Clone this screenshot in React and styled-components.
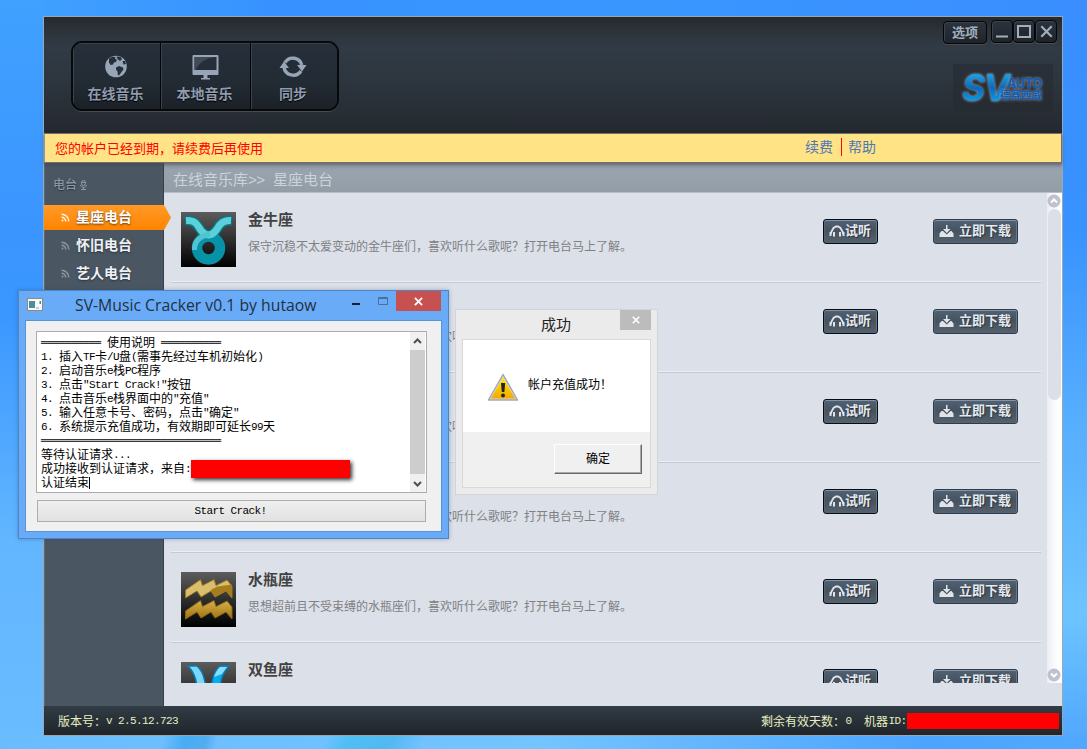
import React from "react";
import styled, { createGlobalStyle, css } from "styled-components";

const CJK = '"Liberation Sans", "Noto Sans CJK SC", sans-serif';
const PIXEL = '"Liberation Mono", "Noto Sans CJK SC", monospace';

const Global = createGlobalStyle`
  * { box-sizing: border-box; }
  body { margin: 0; font-family: ${CJK}; overflow: hidden; }
`;

const Desktop = styled.div`
  position: relative;
  width: 1087px;
  height: 749px;
  overflow: hidden;
  background:
    linear-gradient(100deg, transparent 15%, rgba(58, 166, 240, 0.75) 17%, rgba(70, 165, 235, 0.7) 19%, transparent 20%) 0 736px / 1087px 13px no-repeat,
    linear-gradient(120deg, transparent 30%, rgba(70, 190, 240, 0.8) 32%, rgba(70, 180, 235, 0.7) 36%, transparent 39%) 0 736px / 1087px 13px no-repeat,
    linear-gradient(90deg, #6bbcff 0%, #73c4ff 50%, #4da4ff 85%, #50a8ff 100%) 0 736px / 1087px 13px no-repeat,
    linear-gradient(180deg, #3a8eff 0%, #3892ff 30%, #55adff 55%, #6cc4ff 82%, #4fa6ff 100%) 1063px 0 / 24px 749px no-repeat,
    linear-gradient(180deg, #40a1ff 0%, #3b95ff 30%, #3a97ff 42%, #62b6ff 72%, #6abcff 100%) 0 0 / 44px 749px no-repeat,
    linear-gradient(90deg, #41a2ff 0%, #3792ff 25%, #3996ff 60%, #3a8eff 100%);
`;

const AppWindow = styled.div`
  position: absolute;
  left: 43px;
  top: 16px;
  width: 1020px;
  height: 720px;
  display: flex;
  flex-direction: column;
  border: 1px solid #9aa6b2;
  background: #dce0e8;
`;

const Header = styled.header`
  height: 116px;
  flex: none;
  display: flex;
  justify-content: space-between;
  align-items: flex-start;
  padding: 2px 3px 0 27px;
  background: linear-gradient(180deg, #26292e 0%, #2d343c 14%, #313b45 26%, #2d353e 55%, #24292f 100%);
`;

const ToolGroup = styled.nav`
  display: flex;
  width: 268px;
  height: 70px;
  margin-top: 22px;
  border: 2px solid #07090b;
  border-radius: 11px;
  box-shadow: 0 1px 0 #434b53;
  overflow: hidden;
`;

const Tool = styled.div`
  width: ${(p) => p.$w}px;
  display: flex;
  flex-direction: column;
  align-items: center;
  padding-right: 2px;
  border-left: ${(p) => (p.$first ? "0" : "1px solid #020304")};
  box-shadow: inset 1px 1px 0 #3b444e;
  background: linear-gradient(180deg, #262f3a 0%, #232c35 55%, #1c2127 100%);
  color: #8f9caf;
  font: 700 14px/20px ${CJK};
  text-shadow: 0 1px 1px #000;
  svg { height: 30px; margin: 8px 0 3px; flex: none; }
`;

const HeaderRight = styled.div`
  display: flex;
  flex-direction: column;
  align-items: flex-end;
`;

const WinBar = styled.div`
  display: flex;
  align-items: flex-start;
  padding-top: 1px;
  padding-right: 2px;
`;

const darkKey = css`
  border: 1px solid #050607;
  border-radius: 4px;
  background: linear-gradient(180deg, #2b333d, #1e242a);
  box-shadow: 0 1px 0 #4d4a4d, inset 1px 1px 0 #39434e;
  color: #a3aebd;
`;

const OptionKey = styled.div`
  ${darkKey}
  width: 44px;
  height: 23px;
  margin: 1px 4px 0 0;
  font: 700 13px/22px ${CJK};
  text-align: center;
`;

const WinKey = styled.div`
  ${darkKey}
  width: 22px;
  height: 23px;
  display: flex;
  align-items: center;
  justify-content: center;
`;

const LogoBox = styled.div`
  width: 100px;
  height: 47px;
  margin: 20px 6px 0 0;
  display: flex;
  align-items: center;
  padding-left: 9px;
  background: rgba(38, 42, 49, 0.55);
`;

const LogoMark = styled.div`
  flex: none;
  width: 60px;
  margin-right: -22px;
  font: italic 700 37px/42px Inter, "Liberation Sans", sans-serif;
  letter-spacing: -1.5px;
  transform: scaleX(0.95);
  transform-origin: left;
  white-space: nowrap;
  color: transparent;
  background: linear-gradient(180deg, #1a9be2 20%, #0b69bb 50%, #1298e0 80%);
  background-clip: text;
  filter: drop-shadow(0 0 1.5px rgba(200, 215, 235, 0.8));
`;

const LogoText = styled.div`
  flex: none;
  width: 43px;
  margin: 2px 0 0 -1px;
  color: #0f5cb4;
  text-align: right;
  white-space: nowrap;
  filter: drop-shadow(0 0 1.5px rgba(200, 215, 235, 0.8));
  div { font: 700 12.5px/12px Inter, "Liberation Sans", sans-serif; letter-spacing: -0.2px; }
  small { display: block; font: 700 10.5px/10px ${CJK}; }
`;

const Notice = styled.div`
  height: 30px;
  flex: none;
  display: flex;
  align-items: center;
  padding: 0 185px 2px 10px;
  border: 1px solid #73706a;
  border-left-color: #8d98a3;
  background: #ffe384;
  color: #f00;
  font-size: 13px;
  box-shadow: 0 2px 3px rgba(60, 70, 80, 0.55);
  z-index: 1;
`;

const NoticeLinks = styled.div`
  margin-left: auto;
  display: flex;
  align-items: center;
  color: #4d78b8;
  font-size: 14px;
  line-height: 18px;
  span + span { border-left: 1px solid #f00; margin-left: 8px; padding-left: 6px; }
`;

const Body = styled.div`
  flex: 1;
  min-height: 0;
  display: flex;
`;

const Sidebar = styled.aside`
  width: 120px;
  flex: none;
  background: #4a5763;
  border-left: 1px solid #5c6975;
  border-right: 1px solid #36414c;
`;

const SideTitle = styled.div`
  height: 42px;
  display: flex;
  align-items: center;
  gap: 3px;
  padding: 1px 0 0 8px;
  color: #8a97a5;
  font: 500 12px/18px ${CJK};
  text-shadow: 0 1px 1px #2d363f;
`;

const SideItem = styled.div`
  height: 25px;
  margin: 0 ${(p) => (p.$active ? "-8px" : "0")} 3px -1px;
  display: flex;
  align-items: center;
  gap: 6px;
  padding-left: 17px;
  color: ${(p) => (p.$active ? "#fff" : "#edf1f5")};
  font: 700 14px/25px ${CJK};
  text-shadow: 0 1px 2px rgba(30, 35, 40, 0.7);
  ${(p) =>
    p.$active &&
    css`
      position: relative;
      background: linear-gradient(180deg, #ff9a28, #ff8400);
      clip-path: polygon(0 0, 120px 0, 100% 50%, 120px 100%, 0 100%);
    `}
  svg { color: ${(p) => (p.$active ? "#fff0dc" : "#8b97a4")}; }
`;

const Main = styled.main`
  flex: 1;
  min-width: 0;
  display: flex;
  flex-direction: column;
`;

const Crumb = styled.div`
  height: 30px;
  flex: none;
  padding: 1px 0 0 9px;
  border-bottom: 1px solid #b5bfc9;
  background: linear-gradient(180deg, #8f99a4, #98a3ae 30%, #929da6);
  color: #ccd3da;
  font: 15px/32px ${CJK};
  i { font: 15px/1 ${PIXEL}; letter-spacing: -0.7px; }
`;

const Scroller = styled.div`
  height: 490px;
  flex: none;
  display: flex;
  justify-content: space-between;
  overflow: hidden;
`;

const List = styled.div`
  width: 870px;
  margin-left: 7px;
`;

const Row = styled.div`
  height: 90px;
  display: flex;
  padding: 19px 0 0 10px;
  border-bottom: 1px solid #c3c9d8;
  box-shadow: inset 0 -1px 0 #ebeff5;
`;

const Thumb = styled.div`
  width: 55px;
  height: 55px;
  background: linear-gradient(180deg, #5c5c5c, #000);
  svg { display: block; }
`;

const RowText = styled.div`
  width: 587px;
  padding-left: 12px;
  h3 { margin: -3px 0 9px; font: 700 15px/21px ${CJK}; color: #424242; }
  p { margin: 0; font: 12px/17px ${CJK}; color: #7e8084; white-space: nowrap; }
`;

const Key = styled.div`
  width: ${(p) => p.$w}px;
  height: 25px;
  margin: 7px ${(p) => p.$gap || 0}px 0 0;
  display: flex;
  align-items: center;
  justify-content: space-between;
  padding: 0 6px 1px 5px;
  border: 1px solid ${(p) => p.$edge};
  border-radius: 3px;
  box-shadow: inset 0 1px 0 #8194a8, inset -1px 0 0 #63778b, inset 0 0 0 1px #526477;
  background: linear-gradient(180deg, #526275, #46535f 45%, #55626e);
  color: #e3e8ee;
  font: 700 13px/22px ${CJK};
  text-shadow: 1px 1px 1px #27303a;
`;

const ScrollRail = styled.div`
  width: 15px;
  display: flex;
  flex-direction: column;
  align-items: center;
  justify-content: space-between;
  padding: 1px 1px 1px 0;
  background: linear-gradient(90deg, #eceef3, #fff 70%);
`;

const ScrollThumb = styled.div`
  width: 13px;
  height: 191px;
  margin: 1px 0 auto;
  border-radius: 7px;
  background: #dcdee8;
`;

const Footer = styled.footer`
  height: 29px;
  flex: none;
  display: flex;
  align-items: center;
  padding: 0 3px 0 14px;
  background: linear-gradient(180deg, #313c46, #20252a);
  color: #e7efc2;
  font-size: 12px;
  white-space: pre;
`;

const StatusRight = styled.div`
  margin-left: auto;
  display: flex;
  align-items: center;
  gap: 0.5px;
`;

const Redacted = styled.span`
  display: inline-block;
  flex: none;
  width: ${(p) => p.$w}px;
  height: ${(p) => p.$h}px;
  background: #f00;
  ${(p) => p.$shadow && "box-shadow: 2px 2px 4px rgba(0,0,0,.8);"}
`;

const Cracker = styled.div`
  position: absolute;
  z-index: 3;
  left: 18px;
  top: 290px;
  width: 431px;
  height: 249px;
  border: 1px solid #4b86c6;
  background: #6aabf7;
  box-shadow: 0 0 4px rgba(40, 60, 90, 0.35);
  padding: 0 6px 6px;
  display: flex;
  flex-direction: column;
`;

const CrackTitle = styled.div`
  height: 29px;
  flex: none;
  display: flex;
  align-items: flex-start;
  padding-left: 2px;
  color: #22303f;
`;

const AppIconBox = styled.div`
  width: 16px;
  padding-top: 7px;
  svg { display: block; }
`;

const CrackName = styled.div`
  width: 284px;
  padding-left: 32px;
  font: 15.75px/29px "Open Sans", sans-serif;
  white-space: nowrap;
`;

const CloseKey = styled.div`
  width: ${(p) => p.$w}px;
  height: 20px;
  display: flex;
  align-items: center;
  justify-content: center;
  background: ${(p) => p.$bg};
`;

const CrackBody = styled.div`
  flex: 1;
  display: flex;
  flex-direction: column;
  padding: 10px 14px 9px 10px;
  border: 1px solid #5793d6;
  background: #f0f0f0;
`;

const TextArea = styled.div`
  height: 162px;
  width: 391px;
  display: flex;
  justify-content: space-between;
  border: 1px solid #abadb3;
  background: #fff;
`;

const Lines = styled.div`
  padding: 4px 0 0 4px;
  color: #000;
  font-size: 12px;
  white-space: pre;
`;

const Line = styled.div`
  height: 14px;
  line-height: 14px;
  display: flex;
  align-items: center;
`;

const Latin = styled.span`
  font-family: "Liberation Mono", monospace;
  font-size: 11px;
  letter-spacing: -0.6px;
`;

const Rule = styled.span`
  font-family: "DejaVu Sans Mono", monospace;
  font-size: 10px;
  letter-spacing: -0.02px;
`;

const Caret = styled.span`
  width: 1px;
  height: 12px;
  background: #000;
`;

const NativeRail = styled.div`
  width: 15px;
  margin-right: 1px;
  display: flex;
  flex-direction: column;
  align-items: center;
  background: #f0f0f0;
  &::before { content: ""; order: 1; width: 100%; height: 124px; background: #cdcdcd; }
  svg { height: 18px; }
  svg:last-child { order: 2; }
`;

const StartKey = styled.div`
  width: 389px;
  height: 22px;
  margin: 7px 0 0 1px;
  padding-right: 2px;
  border: 1px solid #adadad;
  background: linear-gradient(180deg, #efefef, #e2e2e2);
  font-size: 12px;
  line-height: 19px;
  text-align: center;
`;

const Dialog = styled.div`
  position: absolute;
  z-index: 2;
  left: 455px;
  top: 309px;
  width: 203px;
  height: 186px;
  display: flex;
  flex-direction: column;
  padding: 0 6px 6px;
  border: 1px solid #d2d4d7;
  background: #ebebeb;
`;

const DialogTitle = styled.div`
  height: 29px;
  display: flex;
  justify-content: flex-end;
  font: 15px/29px ${CJK};
  color: #222;
  > span { width: 79px; }
`;

const DialogBody = styled.div`
  flex: 1;
  display: flex;
  flex-direction: column;
  border: 1px solid #d9d9d9;
  background: #f0f0f0;
`;

const Message = styled.div`
  height: 92px;
  display: flex;
  align-items: center;
  gap: 9px;
  padding: 2px 0 0 24px;
  background: #fff;
  font-size: 12px;
  color: #000;
  span { margin-top: -8px; white-space: nowrap; }
`;

const ClassicKey = styled.div`
  width: 88px;
  height: 30px;
  margin: 12px 8px 0 auto;
  border: 1px solid;
  border-color: #fff #696969 #696969 #fff;
  box-shadow: inset -1px -1px 0 #a8a8a8;
  font: 12px/29px ${CJK};
  text-align: center;
`;

/* Half-width characters take exactly 6px beside 12px ideographs. */
const Mixed = ({ children }) =>
  children.split(/(═+|[\x20-\x7e]+)/).map((s, i) => {
    if (!s) return null;
    if (s[0] === "═") return <Rule key={i}>{s}</Rule>;
    return i % 2 ? <Latin key={i}>{s}</Latin> : <span key={i}>{s}</span>;
  });

const GlobeIcon = () => (
  <svg width="24" height="30" viewBox="0 0 24 30">
    <circle cx="12" cy="15.500" r="10.800" fill="#98a5b6" />
    <path d="M5 7.500l3.500 -1.800 3 .3 -.5 2 2 .5 -1 2.500 -2 .5 -1 2 -2.500 .5 -1.500 -2.500z M12.500 5.500l4 .5 1.500 2 -2 2 -2.500 -2z M12 16.500l3 -1.500 4 1.500 .5 2 -2 2.500 -2.500 3.500 -1.200 -.8 -.3 -3.200 -1.500 -2z M18.500 10l2.500 0 1 3 -2.500 .5z" fill="#25303b" />
  </svg>
);

const MonitorIcon = () => (
  <svg width="28" height="30" viewBox="0 0 28 30">
    <path d="M2.500 4h24q1 0 1 1v18q0 1-1 1h-10v3h2.500v1.500h-9v-1.500h2.500v-3h-10q-1 0-1-1v-18q0-1 1-1z" fill="#98a5b6" />
    <rect x="3.500" y="6" width="22" height="13" fill="#262f39" />
    <path d="M3.500 6h22c-11 1-17 5-21 13h-1z" fill="#414b56" />
  </svg>
);

const SyncIcon = () => (
  <svg width="28" height="30" viewBox="0 0 28 30">
    <g fill="none" stroke="#98a5b6" strokeWidth="3.400">
      <path d="M6 11.500A9.300 9.300 0 0 1 22.800 14" />
      <path d="M22 20A9.300 9.300 0 0 1 5 16" />
    </g>
    <path d="M18 14h9.500l-4.500 6.500z M.5 17l4.500 -6.500 5 6.500z" fill="#98a5b6" />
  </svg>
);

const FeedIcon = () => (
  <svg width="9" height="9" viewBox="0 0 9 9" fill="none" stroke="currentColor" strokeWidth="1.500">
    <path d="M.5 1.200A7.300 7.300 0 0 1 7.800 8.500M.5 4.200A4.300 4.300 0 0 1 4.800 8.500" />
    <circle cx="1.500" cy="7.500" r="1" fill="currentColor" stroke="none" />
  </svg>
);

const MicIcon = () => (
  <svg width="7" height="10" viewBox="0 0 7 10" fill="none" stroke="#8a97a5">
    <rect x="1.500" y=".5" width="4" height="5" rx="2" />
    <path d="M1.500 2.500h4M.5 5c0 3 6 3 6 0M3.500 7v2.500M1 9.500h5" />
  </svg>
);

const HeadphoneIcon = () => (
  <svg width="16" height="12" viewBox="0 0 16 12">
    <path d="M2 9V7.500L4.500 3L7 1.500H9L11.500 3L14 7.500V9" fill="none" stroke="#dfe4ea" strokeWidth="1.800" />
    <path d="M.5 7h2v4h-2z M4 7h2v4.500h-2z M10 7h2v4.500h-2z M13.500 7h2v4h-2z" fill="#dfe4ea" />
  </svg>
);

const DownloadIcon = () => (
  <svg width="15" height="13" viewBox="0 0 15 13" fill="#dfe4ea">
    <path d="M7 0h1.500v4h3l-3.700 4 -3.800 -4h3z" />
    <path d="M2.500 6h1.500l3.800 3.500 3.700 -3.500h1l2 2.500v3.500h-14v-3.500z" />
  </svg>
);

const RoundArrow = ({ down }) => (
  <svg width="14" height="14" viewBox="0 0 14 14">
    <circle cx="7" cy="7" r="6.500" fill="#bfc1d0" />
    <path d={down ? "M4 5.500l3 3 3-3" : "M4 8.500l3-3 3 3"} fill="none" stroke="#fff" strokeWidth="2" />
  </svg>
);

const NativeArrow = ({ down }) => (
  <svg width="15" height="18" viewBox="0 0 15 18">
    <path d={down ? "M4 8l3.500 3.500L11 8" : "M4 11l3.500-3.500L11 11"} fill="none" stroke="#505050" strokeWidth="2" />
  </svg>
);

const Taurus = () => (
  <svg width="55" height="55" viewBox="0 0 55 55">
    <g fill="none" strokeLinejoin="round">
      <path d="M4 8.500C14 8 16 12 19 17C22 21.500 24 23 27.500 23C31 23 33 21.500 36 17C39 12 42 8 51 8.500" stroke="#0a7686" strokeWidth="10" />
      <circle cx="27.500" cy="36" r="11.500" stroke="#0792a8" strokeWidth="10.500" />
      <path d="M5 8.500C14 8 16 12 19 17C22 21.500 24 23 27.500 23C31 23 33 21.500 36 17C39 12 42 8 50 8.500" stroke="#5bd0d9" strokeWidth="7" />
      <path d="M13.500 38C13 28 20 24 29 22" stroke="#50c5d0" strokeWidth="5" />
    </g>
  </svg>
);

const Aquarius = () => (
  <svg width="55" height="55" viewBox="0 0 55 55">
    <defs>
      <linearGradient id="gold" x1="0" y1="0" x2="0" y2="1">
        <stop offset="0" stopColor="#d6b14a" />
        <stop offset="1" stopColor="#a0720f" />
      </linearGradient>
    </defs>
    <path d="M4.500 18L19.500 7.500l2 6L33 7.500l2 6 11-5.500 5 6v12l-6-7-11 6-4-6-10 6-4-6-11.500 7z" fill="#d8be6d" stroke="#9b7418" />
    <path d="M30.500 17.500l6-3 14.500 -2v13.500l-6-7-11 6-4-6z" fill="#a67d1e" />
    <path d="M4.500 39L19.500 28.500l2 6L33 28.500l2 6 11-5.500 5 6v12l-6-7-11 6-4-6-10 6-4-6-11.500 7z" fill="url(#gold)" stroke="#8a6512" />
  </svg>
);

const Pisces = () => (
  <svg width="55" height="55" viewBox="0 0 55 55">
    <g stroke="#087db5" strokeWidth="1.500">
      <path d="M7 4h9c5 4 8 11 9 24s-2 18-9 23h-9c7-8 9-14 9-23s-3-18-9-24z" fill="#7bd7fa" />
      <path d="M48 4h-9c-5 4-8 11-9 24s2 18 9 23h9c-7-8-9-14-9-23s3-18 9-24z" fill="#03adf0" />
    </g>
    <path d="M46 5h-7c-3 3-5 6-6 10l8-3z" fill="#8adcfb" />
  </svg>
);

const WarningIcon = () => (
  <svg width="32" height="29" viewBox="0 0 32 29">
    <defs>
      <linearGradient id="warn" x1="0" y1="0" x2="0" y2="1">
        <stop offset="0" stopColor="#ffe900" />
        <stop offset="1" stopColor="#f6a800" />
      </linearGradient>
    </defs>
    <path d="M16 1.500L30.500 27H1.500z" fill="#d8dade" stroke="#a5a8ac" strokeWidth="1.500" strokeLinejoin="round" />
    <path d="M16 4.500L28 25.500H4z" fill="url(#warn)" />
    <path d="M14 10h4.200l-.8 9h-2.600z" fill="#20252b" />
    <circle cx="16" cy="22.500" r="2" fill="#20252b" />
  </svg>
);

const AppIcon = () => (
  <svg width="16" height="13" viewBox="0 0 16 13">
    <rect x=".5" y=".5" width="15" height="12" fill="#fafafa" stroke="#8a8a8a" />
    <path d="M2 3h6v7h-6z" fill="#4c8f96" />
    <path d="M9 9h3v2h-3z" fill="#ccc" />
    <path d="M12.500 3h1.500v3h-1.500z" fill="#2f9d5d" />
  </svg>
);

const Cross = ({ size = 9, color, w = 2 }) => (
  <svg width={size} height={size} viewBox="0 0 10 10">
    <path d="M1 1l8 8M9 1l-8 8" stroke={color} strokeWidth={w} />
  </svg>
);

const tail = "，喜欢听什么歌呢？打开电台马上了解。";
const rows = [
  { name: "金牛座", text: "保守沉稳不太爱变动的金牛座们", Icon: Taurus },
  { name: "双子座", text: "灵活多变又充满好奇的双子座们", Icon: Pisces },
  { name: "巨蟹座", text: "温柔体贴且非常恋家的巨蟹座们", Icon: Aquarius },
  { name: "狮子座", text: "热情大方且充满自信的狮子座们", Icon: Taurus },
  { name: "水瓶座", text: "思想超前且不受束缚的水瓶座们", Icon: Aquarius },
  { name: "双鱼座", text: "浪漫多情且富有幻想的双鱼座们", Icon: Pisces },
];

const bar = "═".repeat(10);
const log = [
  `${bar} 使用说明 ${bar}`,
  "1. 插入TF卡/U盘(需事先经过车机初始化)",
  "2. 启动音乐e栈PC程序",
  '3. 点击"Start Crack!"按钮',
  '4. 点击音乐e栈界面中的"充值"',
  '5. 输入任意卡号、密码，点击"确定"',
  "6. 系统提示充值成功，有效期即可延长99天",
  bar.repeat(3),
  "等待认证请求...",
];

export default function App() {
  return (
    <Desktop>
      <Global />
      <AppWindow>
        <Header>
          <ToolGroup>
            <Tool $w={87} $first><GlobeIcon />在线音乐</Tool>
            <Tool $w={90}><MonitorIcon />本地音乐</Tool>
            <Tool $w={87}><SyncIcon />同步</Tool>
          </ToolGroup>
          <HeaderRight>
            <WinBar>
              <OptionKey>选项</OptionKey>
              <WinKey><svg width="12" height="12"><path d="M0 10.500h12" stroke="#a3aebd" strokeWidth="2" /></svg></WinKey>
              <WinKey><svg width="14" height="14"><rect x="1" y="1" width="12" height="11" fill="none" stroke="#a3aebd" strokeWidth="2" /></svg></WinKey>
              <WinKey><Cross size={13} color="#a3aebd" w={1.7} /></WinKey>
            </WinBar>
            <LogoBox>
              <LogoMark>SV</LogoMark>
              <LogoText><div>AUTO</div><small>德赛西威</small></LogoText>
            </LogoBox>
          </HeaderRight>
        </Header>
        <Notice>
          您的帐户已经到期，请续费后再使用
          <NoticeLinks><span>续费</span><span>帮助</span></NoticeLinks>
        </Notice>
        <Body>
          <Sidebar>
            <SideTitle>电台<MicIcon /></SideTitle>
            <SideItem $active><FeedIcon />星座电台</SideItem>
            <SideItem><FeedIcon />怀旧电台</SideItem>
            <SideItem><FeedIcon />艺人电台</SideItem>
          </Sidebar>
          <Main>
            <Crumb>在线音乐库<i>&gt;&gt; </i>星座电台</Crumb>
            <Scroller>
              <List>
                {rows.map(({ name, text, Icon }) => (
                  <Row key={name}>
                    <Thumb><Icon /></Thumb>
                    <RowText><h3>{name}</h3><p>{text + tail}</p></RowText>
                    <Key $w={55} $gap={55} $edge="#0a0d10"><HeadphoneIcon />试听</Key>
                    <Key $w={85} $edge="#303b46"><DownloadIcon />立即下载</Key>
                  </Row>
                ))}
              </List>
              <ScrollRail>
                <RoundArrow />
                <ScrollThumb />
                <RoundArrow down />
              </ScrollRail>
            </Scroller>
          </Main>
        </Body>
        <Footer>
          <Mixed>版本号：v 2.5.12.723</Mixed>
          <StatusRight>
            <Mixed>{"剩余有效天数：0  机器ID:"}</Mixed>
            <Redacted $w={152} $h={16} />
          </StatusRight>
        </Footer>
      </AppWindow>

      <Dialog>
        <DialogTitle>
          <span>成功</span>
          <CloseKey $w={31} $bg="#bcbcbc"><Cross size={8} color="#fff" /></CloseKey>
        </DialogTitle>
        <DialogBody>
          <Message><WarningIcon /><span>帐户充值成功！</span></Message>
          <ClassicKey>确定</ClassicKey>
        </DialogBody>
      </Dialog>

      <Cracker>
        <CrackTitle>
          <AppIconBox><AppIcon /></AppIconBox>
          <CrackName>SV-Music Cracker v0.1 by hutaow</CrackName>
          <svg width="69" height="20" viewBox="0 0 69 20">
            <path d="M25 13h8" stroke="#16222e" strokeWidth="2" />
            <path d="M51.500 6.500h9v7h-9zM51 7.500h10" fill="none" stroke="#4c7099" />
          </svg>
          <CloseKey $w={45} $bg="#c75050"><Cross size={9} color="#fff" /></CloseKey>
        </CrackTitle>
        <CrackBody>
          <TextArea>
            <Lines>
              {log.map((l) => <Line key={l}><Mixed>{l}</Mixed></Line>)}
              <Line><Mixed>成功接收到认证请求，来自:</Mixed><Redacted $w={159} $h={18} $shadow /></Line>
              <Line><Mixed>认证结束</Mixed><Caret /></Line>
            </Lines>
            <NativeRail><NativeArrow /><NativeArrow down /></NativeRail>
          </TextArea>
          <StartKey><Mixed>Start Crack!</Mixed></StartKey>
        </CrackBody>
      </Cracker>
    </Desktop>
  );
}
